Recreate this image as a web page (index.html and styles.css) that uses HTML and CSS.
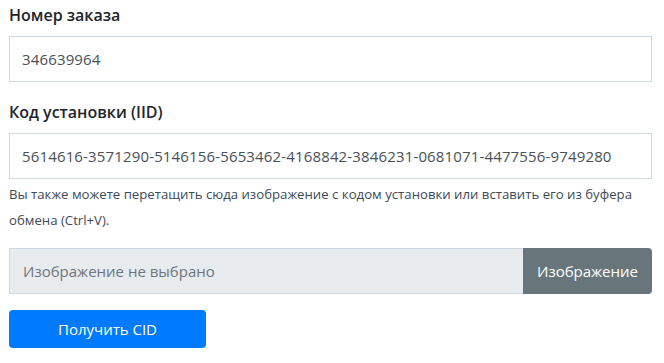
FILE: index.html
```html
<!DOCTYPE html>
<html>
    <head>
        <meta charset="UTF-8"/>
        <meta name="viewport" content="width=device-width, initial-scale=1.0"/>
        <title>Получить CID</title>
        <link rel="stylesheet" href="styles.css">
    </head>
    <body>
        <form class="cid-form">
            <div class="form-group">
                <label for="order">Номер заказа</label>
                <input type="text" id="order" class="form-control" value="346639964">
            </div>

            <div class="form-group iid-group">
                <label for="iid">Код установки (IID)</label>
                <input type="text" id="iid" class="form-control" value="5614616-3571290-5146156-5653462-4168842-3846231-0681071-4477556-9749280">
                <small class="form-text">Вы также можете перетащить сюда изображение с кодом установки или вставить его из буфера обмена (Ctrl+V).</small>
            </div>

            <div class="file-group">
                <span class="file-name">Изображение не выбрано</span>
                <span class="file-btn">Изображение</span>
            </div>

            <button type="button" class="btn btn-primary">Получить CID</button>
        </form>
    </body>
</html>
```

FILE: styles.css
```css
body {
    margin: 0;
    padding: 0;
    font-family: 'Open Sans', 'Noto Sans', sans-serif;
    background: #fff;
    color: #212529;
}

.cid-form {
    padding: 2px 12px 0 9px;
}

.form-group {
    margin-bottom: 17px;
}

.iid-group {
    margin-bottom: 15px;
}

label {
    display: block;
    font-size: 16px;
    font-weight: 600;
    line-height: 26px;
    margin-bottom: 8px;
}

.form-control {
    display: block;
    box-sizing: border-box;
    width: 100%;
    height: 46px;
    padding: 0 12px;
    font-family: inherit;
    font-size: 15px;
    letter-spacing: 0.15px;
    color: #495057;
    background: #fff;
    border: 1px solid #ced8e2;
    border-radius: 0;
    outline: none;
}

.form-text {
    display: block;
    margin-top: 2px;
    font-size: 13.2px;
    line-height: 26px;
    color: #3d4a57;
}

.file-group {
    display: flex;
    height: 46px;
    margin-bottom: 16px;
}

.file-name {
    flex: 1;
    display: flex;
    align-items: center;
    padding: 0 13px;
    background: #e9ecef;
    border: 1px solid #ced8e2;
    border-right: none;
    font-size: 15px;
    color: #6c757d;
}

.file-btn {
    display: flex;
    align-items: center;
    padding: 0 14px;
    background: #68767b;
    color: #fff;
    font-size: 15px;
    border-radius: 0 4px 4px 0;
}

.btn {
    width: 197px;
    height: 38px;
    border: none;
    border-radius: 4px;
    font-family: inherit;
    font-size: 15px;
    cursor: pointer;
}

.btn-primary {
    background: #007bff;
    color: #fff;
}
```
